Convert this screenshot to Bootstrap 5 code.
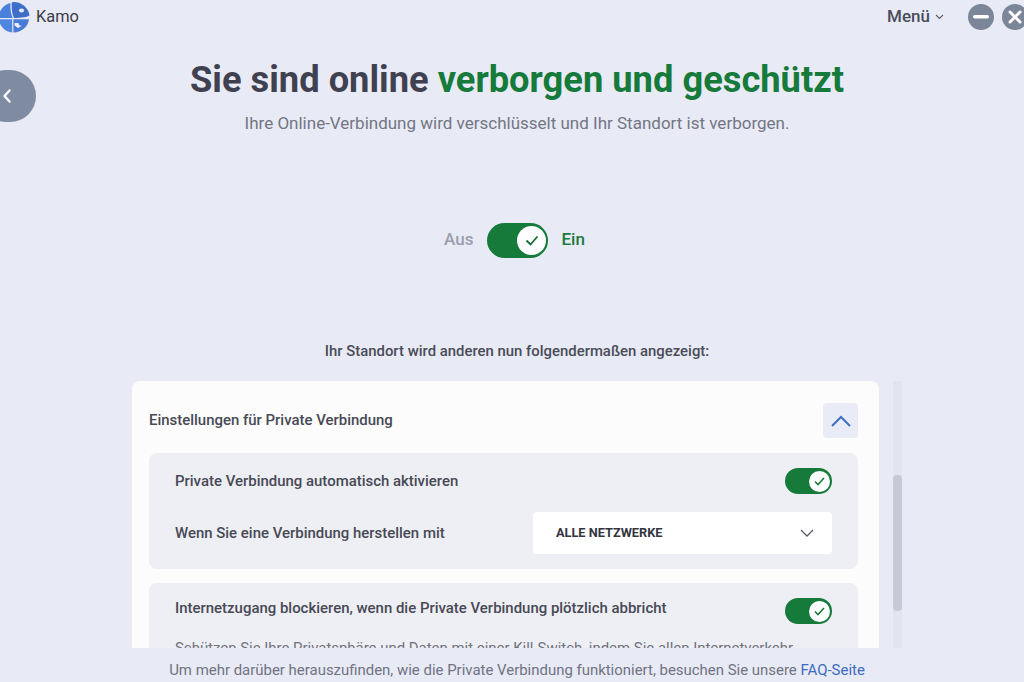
<!DOCTYPE html>
<html lang="de">
<head>
<meta charset="utf-8">
<title>Kamo</title>
<link href="https://cdn.jsdelivr.net/npm/bootstrap@5.3.0/dist/css/bootstrap.min.css" rel="stylesheet">
<style>
html,body{height:682px;overflow:hidden;background:#e8eaf6;}
body{font-family:Roboto,"Liberation Sans",sans-serif;color:#3d3f4b;}
.app-shell{width:1034px;height:682px;position:relative;overflow:hidden;}
.top-bar{height:34px;}
.logo-mark{margin-left:-2px;}
.brand-name{font-size:16.4px;color:#3b3d47;margin-left:6px;}
.menu-label{font-size:17px;font-weight:500;color:#4a4d5b;}
.menu-caret{margin-left:5px;margin-right:24px;}
.win-btn{width:26px;height:26px;border-radius:50%;background:#7c8699;border:0;padding:0;}
.end-gap{width:6px;}
.back-tab{position:absolute;left:-20px;top:70px;width:56px;height:52px;border-radius:26px;background:#7f8ba0;display:flex;align-items:center;justify-content:center;}
.back-glyph{margin-left:-2px;}
.hero-title{font-size:36.3px;font-weight:700;line-height:44px;margin:24px 0 0;color:#3f4150;}
.hero-green{color:#157a3a;}
.hero-sub{font-size:17px;line-height:20px;color:#737683;margin:11px 0 0;}
.main-toggle-row{margin-top:89px;height:36px;padding-right:5px;}
.lbl-off{font-size:17px;font-weight:500;color:#9a9eac;margin-right:6px;}
.lbl-on{font-size:17px;font-weight:500;color:#1c7a3e;margin-left:5px;}
.sw{display:flex;align-items:center;justify-content:flex-end;background:#157a3a;border-radius:999px;}
.sw-lg{width:61px;height:35px;padding-right:2px;}
.sw-sm{width:47px;height:26px;padding-right:2px;}
.sw-knob{background:#fff;border-radius:50%;display:flex;align-items:center;justify-content:center;}
.sw-lg .sw-knob{width:29px;height:29px;}
.sw-sm .sw-knob{width:21px;height:21px;}
.loc-note{font-size:14.9px;font-weight:500;color:#4a4c58;line-height:20px;margin:83px 0 0;}
.scroll-zone{margin-top:20px;height:267px;overflow:hidden;width:770px;}
.sheet{width:747px;background:#fcfcfd;border-radius:8px 8px 0 0;padding:22px 21px 0 17px;height:400px;}
.sheet-head{height:35px;font-size:14.95px;font-weight:500;color:#474955;margin-bottom:15px;}
.chev-btn{width:35px;height:35px;border-radius:4px;background:#e9ecf7;display:flex;align-items:center;justify-content:center;border:0;padding:0;}
.group-box{background:#eeeff4;border-radius:8px;padding:15px 26px;margin-bottom:14px;}
.opt-title{font-size:14.95px;font-weight:500;color:#474955;}
.opt-title-up{margin-bottom:5px;}
.group-row{height:26px;}
.select-row{margin-top:18px;}
.net-select{width:299px;height:42px;background:#fff;border-radius:4px;padding:0 18px 0 23px;font-size:12.75px;font-weight:700;color:#33353f;}
.opt-desc{font-size:14.93px;color:#70737f;margin:14px 0 0;line-height:20px;}
.track{width:9px;margin-left:14px;background:#e2e4f0;height:267px;}
.thumb{height:136px;margin-top:94px;background:#c7c9d6;border-radius:4px;}
.foot-note{height:34px;font-size:14.94px;color:#6f7382;line-height:20px;padding-top:12px;}
.foot-note a{color:#3d6cc0;text-decoration:none;}
</style>
</head>
<body>
<div class="app-shell">
  <div class="top-bar d-flex align-items-center">
    <svg width="32" height="32" viewBox="0 0 32 32" class="flex-shrink-0 logo-mark">
      <path d="M12.5 2A15.5 15.5 0 0 0 .5 17h14.2C13 12.5 12 8 12.5 2z" fill="#4a80da"/>
      <path d="M13.8 1.2A15.5 15.5 0 0 1 31.5 14.5c-2 1.5-8 2.5-15.6 2.5C14 12 13.4 7 13.8 1.2z" fill="#3e6ec8"/>
      <ellipse cx="23.5" cy="9.5" rx="2.6" ry="2" fill="#e8eaf6"/>
      <path d="M.7 18.2h13.5v13.3A15.5 15.5 0 0 1 .7 18.2z" fill="#4f86e0"/>
      <path d="M15.4 18.2h15.6a15.5 15.5 0 0 1-15.6 13.3z" fill="#4a7bd4"/>
      <path d="M16.5 22h4l.5 2 2.5 1-3.5 2-3.5-2.5z" fill="#e8eaf6"/>
    </svg>
    <span class="brand-name">Kamo</span>
    <div class="ms-auto d-flex align-items-center">
      <span class="menu-label">Menü</span>
      <svg width="9" height="6" viewBox="0 0 9 6" class="menu-caret"><path d="M1 1l3.5 3.5L8 1" fill="none" stroke="#5a5e6c" stroke-width="1.1"/></svg>
      <button class="win-btn d-flex align-items-center justify-content-center" aria-label="Minimieren"><svg width="16" height="4" viewBox="0 0 16 4"><rect width="16" height="3.4" rx="1.7" fill="#fff"/></svg></button>
      <button class="win-btn d-flex align-items-center justify-content-center ms-2" aria-label="Schließen"><svg width="14" height="14" viewBox="0 0 14 14"><path d="M2 2l10 10M12 2L2 12" stroke="#fff" stroke-width="3" stroke-linecap="round"/></svg></button>
      <span class="end-gap"></span>
    </div>
  </div>

  <div class="back-tab"><svg width="12" height="16" viewBox="0 0 12 16" class="back-glyph"><path d="M8.5 2.5L3.5 8l5 5.5" fill="none" stroke="#fff" stroke-width="2.4" stroke-linecap="round" stroke-linejoin="round"/></svg></div>

  <div class="text-center">
    <h1 class="hero-title">Sie sind online <span class="hero-green">verborgen und geschützt</span></h1>
    <p class="hero-sub">Ihre Online-Verbindung wird verschlüsselt und Ihr Standort ist verborgen.</p>
    <div class="main-toggle-row d-flex justify-content-center align-items-center gap-2">
      <span class="lbl-off">Aus</span>
      <div class="sw sw-lg"><div class="sw-knob"><svg width="14" height="11" viewBox="0 0 14 11"><path d="M1.5 5.5l4 4 7-8" fill="none" stroke="#1a6a38" stroke-width="1.8"/></svg></div></div>
      <span class="lbl-on">Ein</span>
    </div>
    <p class="loc-note">Ihr Standort wird anderen nun folgendermaßen angezeigt:</p>
  </div>

  <div class="scroll-zone d-flex mx-auto">
    <div class="sheet flex-shrink-0">
      <div class="sheet-head d-flex align-items-center justify-content-between">
        <span>Einstellungen für Private Verbindung</span>
        <button class="chev-btn" aria-label="Einklappen"><svg width="20" height="12" viewBox="0 0 20 12"><path d="M1 11l9-9 9 9" fill="none" stroke="#3d6fc4" stroke-width="2"/></svg></button>
      </div>
      <div class="group-box">
        <div class="group-row d-flex align-items-center justify-content-between">
          <span class="opt-title">Private Verbindung automatisch aktivieren</span>
          <div class="sw sw-sm"><div class="sw-knob"><svg width="11" height="9" viewBox="0 0 11 9"><path d="M1 4.5l3 3 6-6.5" fill="none" stroke="#1a7a3c" stroke-width="1.6"/></svg></div></div>
        </div>
        <div class="select-row d-flex align-items-center justify-content-between">
          <span class="opt-title">Wenn Sie eine Verbindung herstellen mit</span>
          <div class="net-select d-flex align-items-center justify-content-between">
            <span>ALLE NETZWERKE</span>
            <svg width="14" height="8" viewBox="0 0 14 8"><path d="M1 1l6 6 6-6" fill="none" stroke="#5a5d68" stroke-width="1.3"/></svg>
          </div>
        </div>
      </div>
      <div class="group-box">
        <div class="group-row d-flex align-items-center justify-content-between">
          <span class="opt-title opt-title-up">Internetzugang blockieren, wenn die Private Verbindung plötzlich abbricht</span>
          <div class="sw sw-sm"><div class="sw-knob"><svg width="11" height="9" viewBox="0 0 11 9"><path d="M1 4.5l3 3 6-6.5" fill="none" stroke="#1a7a3c" stroke-width="1.6"/></svg></div></div>
        </div>
        <p class="opt-desc">Schützen Sie Ihre Privatsphäre und Daten mit einer Kill-Switch, indem Sie allen Internetverkehr</p>
      </div>
    </div>
    <div class="track flex-shrink-0"><div class="thumb"></div></div>
  </div>

  <div class="foot-note text-center">Um mehr darüber herauszufinden, wie die Private Verbindung funktioniert, besuchen Sie unsere <a href="#">FAQ-Seite</a></div>
</div>
</body>
</html>
